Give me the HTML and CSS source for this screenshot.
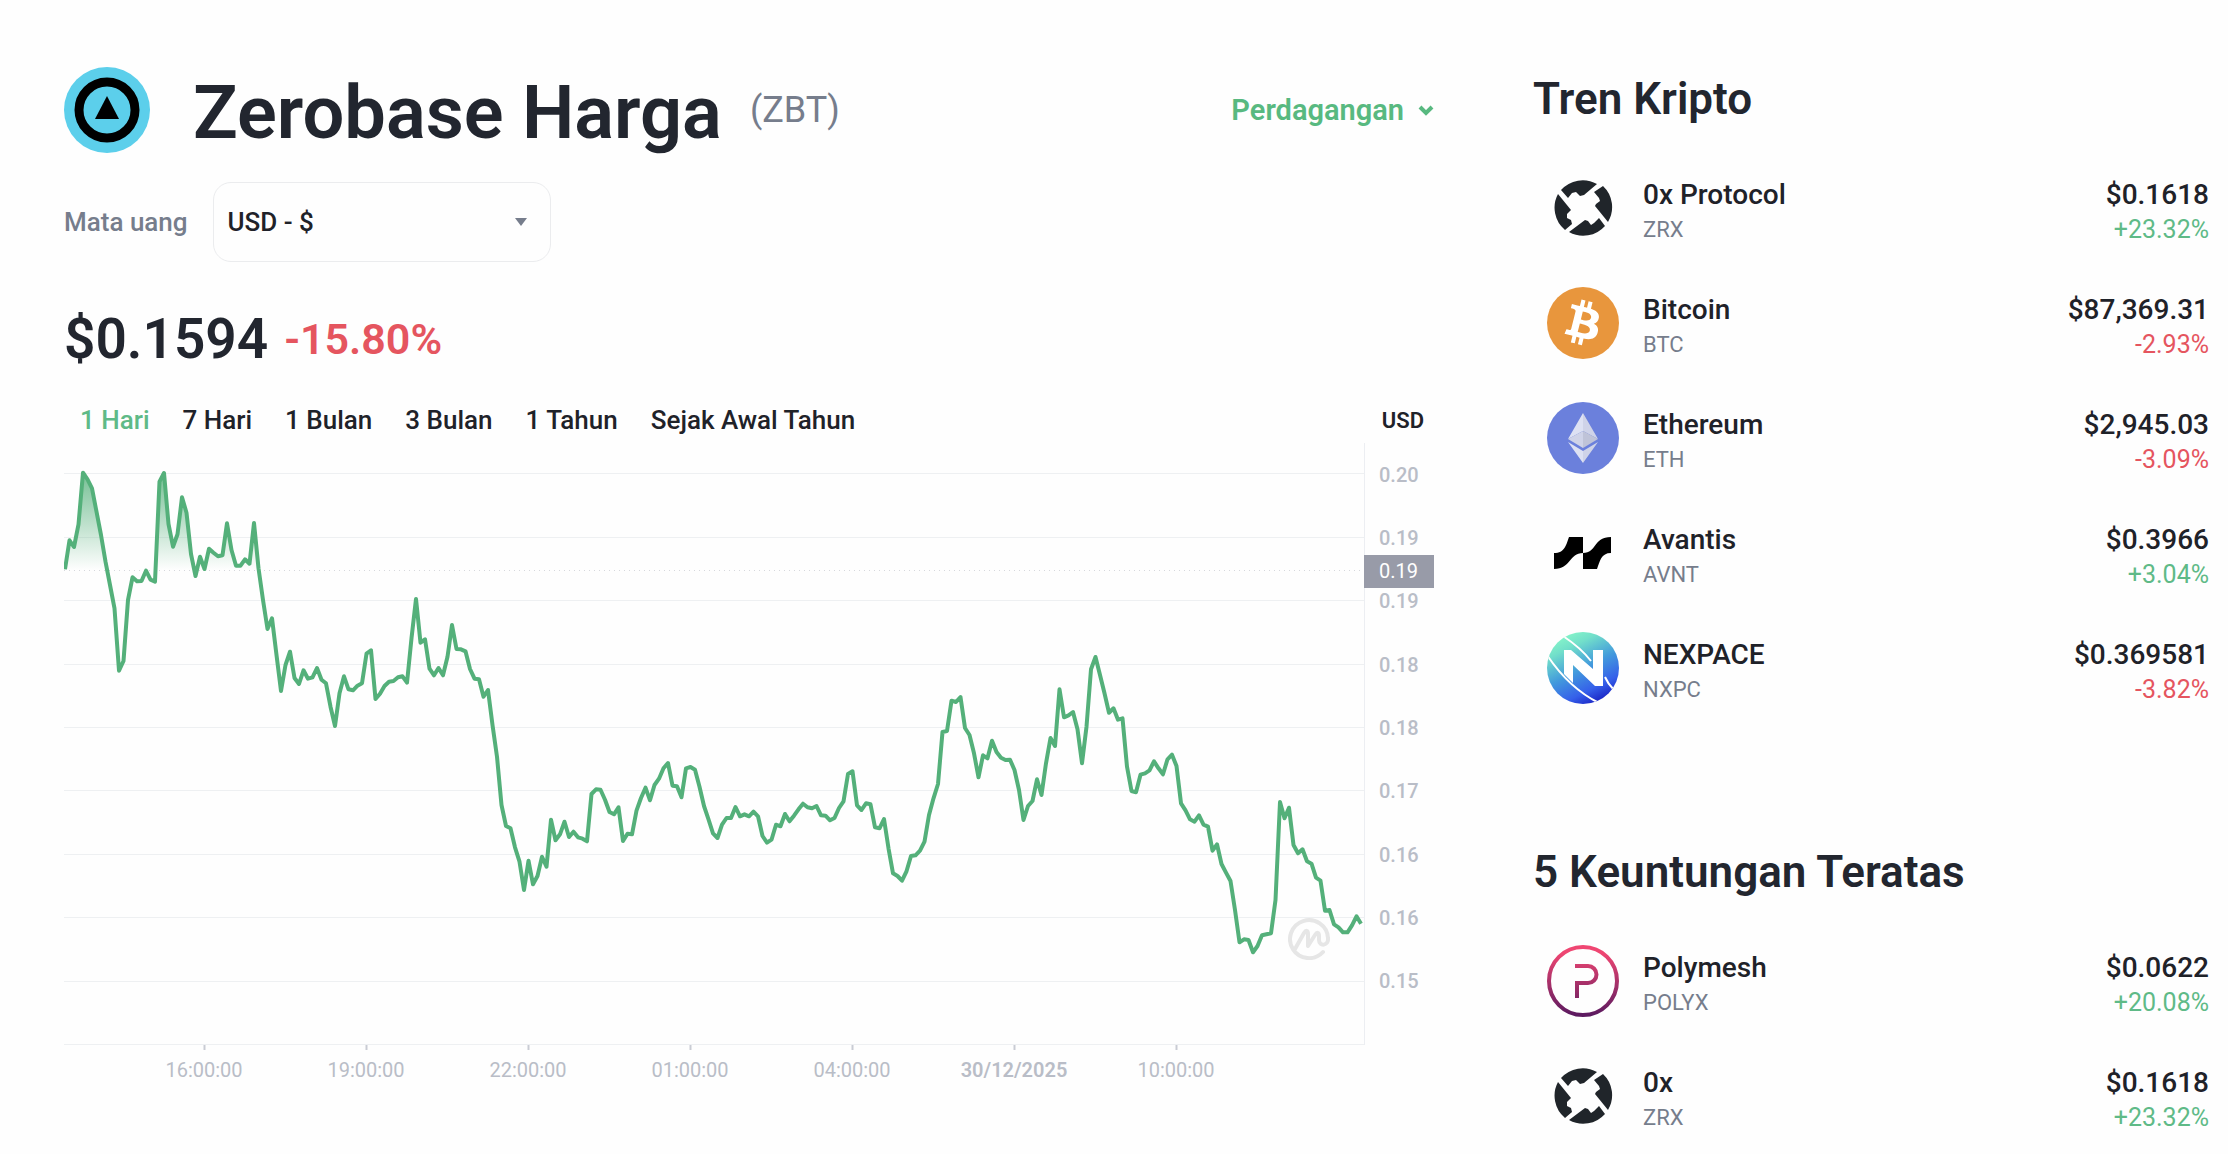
FILE: index.html
```html
<!DOCTYPE html>
<html lang="id">
<head>
  <meta charset="UTF-8">
  <meta name="viewport" content="width=device-width, initial-scale=1">
  <title>Zerobase Harga (ZBT)</title>
  <link rel="stylesheet" href="styles.css">
</head>
<body>

<!-- Logo 0x, dipakai di dua daftar -->
<svg class="sprite" width="0" height="0" aria-hidden="true">
  <symbol id="logo-zrx" viewBox="0 0 72 72">
    <g transform="translate(7 7)" fill="#20252a">
      <path d="M7 11 14 19 18 14 22 13 26 17 30 16 43 5A29 29 0 0 0 7 11Z"/>
      <path d="M49 7 40 13 45 19 46 22 42 25 41 27 54 43A29 29 0 0 0 49 7Z"/>
      <path d="M15 53 31 41 34 42 37 46 40 44 45 39 51 47A29 29 0 0 1 15 53Z"/>
      <path d="M4 15 17 31 13 35 13 39 17 41 18 45 11 51A29 29 0 0 1 4 15Z"/>
    </g>
  </symbol>
</svg>

<div class="page">
  <main class="coin">
    <div class="coin-header">
      <svg class="coin-logo" viewBox="0 0 86 86" aria-hidden="true">
        <circle cx="43" cy="43" r="43" fill="#5ccfeb"/>
        <circle cx="43" cy="43" r="28" fill="none" stroke="#000" stroke-width="9"/>
        <path d="M43 29 55 52H31Z"/>
      </svg>
      <h1>Zerobase Harga</h1>
      <span class="coin-symbol">(ZBT)</span>
      <button class="trade-btn" type="button">
        Perdagangan
        <svg width="16" height="16" viewBox="0 0 16 16" aria-hidden="true"><path d="M2 5 8 11 14 5" fill="none" stroke="currentColor" stroke-width="4"/></svg>
      </button>
    </div>

    <div class="currency">
      <label for="currency">Mata uang</label>
      <div class="select-box">
        <select id="currency" name="currency">
          <option value="usd">USD - $</option>
        </select>
      </div>
    </div>

    <div class="price">
      <span class="price-value">$0.1594</span>
      <span class="price-change">-15.80%</span>
    </div>

    <div class="chart-header">
      <div class="ranges">
        <button class="range active" type="button">1 Hari</button>
        <button class="range" type="button">7 Hari</button>
        <button class="range" type="button">1 Bulan</button>
        <button class="range" type="button">3 Bulan</button>
        <button class="range" type="button">1 Tahun</button>
        <button class="range" type="button">Sejak Awal Tahun</button>
      </div>
      <span class="unit">USD</span>
    </div>

    <div class="chart">
      <div class="plot">
        <svg class="plot-svg" viewBox="0 0 1300 608" preserveAspectRatio="none" aria-hidden="true">
          <defs>
            <linearGradient id="fill" gradientUnits="userSpaceOnUse" x1="0" y1="30" x2="0" y2="127">
              <stop offset="0" stop-color="#54b07a" stop-opacity=".8"/>
              <stop offset="1" stop-color="#54b07a" stop-opacity="0"/>
            </linearGradient>
            <clipPath id="above"><rect x="0" y="0" width="1300" height="127"/></clipPath>
          </defs>
          <path class="grid-line" d="M0 30.5H1300M0 94.5H1300M0 157.5H1300M0 221.5H1300M0 284.5H1300M0 347.5H1300M0 411.5H1300M0 474.5H1300M0 538.5H1300M0 601.5H1300"/>
          <path class="tick" d="M140.5 602V607M302.5 602V607M464.5 602V607M626.5 602V607M788.5 602V607M950.5 602V607M1112.5 602V607"/>
          <polygon id="area" fill="url(#fill)" clip-path="url(#above)"/>
          <path class="base-line" d="M0 127.5H1300"/>
          <polyline id="line"/>
        </svg>
        <svg class="watermark" viewBox="0 0 42 42" aria-hidden="true">
          <path d="M35 34A19 19 0 1 1 40 20C41 28 31 29 31 22V18C31 14 29 14 27 17L20 28V16C20 12 18 12 16 15L7 31" fill="none" stroke="#e6e6e6" stroke-width="4" stroke-linecap="round" stroke-linejoin="round"/>
        </svg>
      </div>
      <div class="price-axis">
        <span>0.20</span>
        <span>0.19</span>
        <span>0.19</span>
        <span>0.18</span>
        <span>0.18</span>
        <span>0.17</span>
        <span>0.16</span>
        <span>0.16</span>
        <span>0.15</span>
        <span class="price-tag">0.19</span>
      </div>
      <div class="time-axis">
        <span>16:00:00</span>
        <span>19:00:00</span>
        <span>22:00:00</span>
        <span>01:00:00</span>
        <span>04:00:00</span>
        <b>30/12/2025</b>
        <span>10:00:00</span>
      </div>
    </div>
  </main>

  <aside class="sidebar">
    <section>
      <h2>Tren Kripto</h2>
      <ul class="coins">
        <li><a class="coin-row" href="#zrx">
          <svg class="icon" viewBox="0 0 72 72" aria-hidden="true"><use href="#logo-zrx"/></svg>
          <span class="name">0x Protocol<small>ZRX</small></span>
          <span class="quote">$0.1618<small class="up">+23.32%</small></span>
        </a></li>
        <li><a class="coin-row" href="#btc">
          <svg class="icon" viewBox="0 0 64 64" aria-hidden="true">
            <circle cx="32" cy="32" r="32" fill="#e8963d"/>
            <path fill="#fff" fill-rule="evenodd" d="M46.103 27.444c.637-4.258-2.605-6.547-7.038-8.074l1.438-5.768-3.511-.875-1.4 5.616c-.923-.23-1.871-.447-2.813-.662l1.41-5.653-3.509-.875-1.439 5.766c-.764-.174-1.514-.346-2.242-.527l.004-.018-4.842-1.209-.934 3.75s2.605.597 2.55.634c1.422.355 1.679 1.296 1.636 2.042l-1.638 6.571-.006.025-2.296 9.205c-.174.432-.615 1.08-1.609.834.035.051-2.552-.637-2.552-.637l-1.743 4.019 4.569 1.139c.85.213 1.683.436 2.503.646l-1.453 5.834 3.507.875 1.439-5.772c.958.26 1.888.5 2.798.726l-1.434 5.745 3.511.875 1.453-5.823c5.987 1.133 10.489.676 12.384-4.739 1.527-4.36-.076-6.875-3.226-8.515 2.294-.529 4.022-2.038 4.483-5.155zM38.081 38.694c-1.085 4.36-8.426 2.003-10.806 1.412l1.928-7.729c2.38.594 10.012 1.77 8.878 6.317zM39.167 27.381c-.99 3.966-7.1 1.951-9.082 1.457l1.748-7.01c1.982.494 8.365 1.416 7.334 5.553z"/>
          </svg>
          <span class="name">Bitcoin<small>BTC</small></span>
          <span class="quote">$87,369.31<small class="down">-2.93%</small></span>
        </a></li>
        <li><a class="coin-row" href="#eth">
          <svg class="icon" viewBox="0 0 72 72" aria-hidden="true">
            <circle cx="36" cy="36" r="36" fill="#6b80dc"/>
            <path fill="#dde1f3" d="M36 11 21 37 36 29ZM21 40 36 49V61Z"/>
            <path fill="#cfd3e8" d="M36 11 51 37 36 29ZM21 37 36 29V46ZM51 40 36 49V61Z"/>
            <path fill="#bfc3d8" d="M51 37 36 29V46Z"/>
          </svg>
          <span class="name">Ethereum<small>ETH</small></span>
          <span class="quote">$2,945.03<small class="down">-3.09%</small></span>
        </a></li>
        <li><a class="coin-row" href="#avnt">
          <svg class="icon" viewBox="0 0 72 72" aria-hidden="true">
            <path d="M7 36C18 36 19 28 22 20H36V36C22 36 24 52 7 52ZM36 36C50 36 46 20 64 20V36C54 36 53 44 50 52H36Z"/>
          </svg>
          <span class="name">Avantis<small>AVNT</small></span>
          <span class="quote">$0.3966<small class="up">+3.04%</small></span>
        </a></li>
        <li><a class="coin-row" href="#nxpc">
          <svg class="icon" viewBox="0 0 72 72" aria-hidden="true">
            <linearGradient id="nx" x1=".25" y1="0" x2=".75" y2="1">
              <stop offset="0" stop-color="#88f8c8"/>
              <stop offset=".2" stop-color="#72dfca"/>
              <stop offset=".5" stop-color="#439bdc"/>
              <stop offset=".78" stop-color="#3560ea"/>
              <stop offset="1" stop-color="#1418bd"/>
            </linearGradient>
            <clipPath id="nxc"><circle cx="36" cy="36" r="36"/></clipPath>
            <g clip-path="url(#nxc)">
              <rect width="72" height="72" fill="url(#nx)"/>
              <path d="M16 4Q34 16 44 29M0 23Q22 56 52 71M58 45Q61 52 67 58" fill="none" stroke="#fff" stroke-width="2"/>
              <path fill="#fff" d="M17 18H24L46 37V18H56V54H48L26 33V51L17 42Z"/>
            </g>
          </svg>
          <span class="name">NEXPACE<small>NXPC</small></span>
          <span class="quote">$0.369581<small class="down">-3.82%</small></span>
        </a></li>
      </ul>
    </section>

    <section>
      <h2>5 Keuntungan Teratas</h2>
      <ul class="coins">
        <li><a class="coin-row" href="#polyx">
          <svg class="icon" viewBox="0 0 72 72" aria-hidden="true">
            <linearGradient id="poly" gradientUnits="userSpaceOnUse" x1="0" y1="8" x2="0" y2="70">
              <stop offset="0" stop-color="#ef4672"/>
              <stop offset="1" stop-color="#5c1a60"/>
            </linearGradient>
            <g fill="none" stroke="url(#poly)" stroke-width="4">
              <circle cx="36" cy="36" r="34"/>
              <path d="M28 21H41A8.500 8.500 0 0 1 41 38H30V53"/>
            </g>
          </svg>
          <span class="name">Polymesh<small>POLYX</small></span>
          <span class="quote">$0.0622<small class="up">+20.08%</small></span>
        </a></li>
        <li><a class="coin-row" href="#zrx">
          <svg class="icon" viewBox="0 0 72 72" aria-hidden="true"><use href="#logo-zrx"/></svg>
          <span class="name">0x<small>ZRX</small></span>
          <span class="quote">$0.1618<small class="up">+23.32%</small></span>
        </a></li>
      </ul>
    </section>
  </aside>
</div>

<script src="chart.js"></script>
</body>
</html>
```

FILE: styles.css
```css
* {
  box-sizing: border-box;
}

body {
  margin: 0;
  font-family: Roboto, Arial, sans-serif;
  font-size: 28px;
  font-weight: 500;
  color: #1f2229;
  background-color: #fefefe;
}

h1, h2, ul {
  margin: 0;
  padding: 0;
}

button, select {
  font: inherit;
  color: inherit;
  background: none;
  border: none;
  cursor: pointer;
}

.sprite {
  position: absolute;
}

.page {
  display: grid;
  grid-template-columns: 1370fr 676fr;
  gap: 99px;
  height: 100vh;
  overflow: hidden;
  padding: 0 19px 0 64px;
}

/* Kolom kiri */
.coin {
  padding-top: 67px;
}

.coin-header {
  display: flex;
  align-items: center;
  height: 86px;
}

.coin-logo {
  width: 86px;
  height: 86px;
  margin-right: 43px;
}

h1 {
  padding-top: 5px;
  font-size: 74px;
  font-weight: 600;
  line-height: 86px;
  color: #22262f;
}

.coin-symbol {
  margin-left: 28px;
  font-size: 36px;
  font-weight: 400;
  color: #767d8c;
}

.trade-btn {
  display: flex;
  align-items: center;
  gap: 14px;
  margin-left: auto;
  padding: 0;
  font-size: 29px;
  font-weight: 600;
  color: #58b980;
}

.currency {
  display: flex;
  align-items: center;
  gap: 25px;
  margin-top: 29px;
  font-size: 26px;
}

.currency label {
  color: #767d8c;
}

.select-box {
  position: relative;
  width: 338px;
}

.select-box select {
  width: 100%;
  height: 80px;
  padding: 0 14px;
  border: 1px solid #ebecee;
  border-radius: 18px;
  appearance: none;
}

.select-box::after {
  content: "";
  position: absolute;
  top: 36px;
  right: 24px;
  border: 6px solid transparent;
  border-top: 8px solid #767d8c;
  border-bottom: 0;
  pointer-events: none;
}

.price {
  display: flex;
  align-items: center;
  gap: 16px;
  height: 80px;
  margin-top: 37px;
}

.price-value {
  font-size: 55px;
  font-weight: 600;
  color: #22262f;
}

.price-change {
  font-size: 43px;
  font-weight: 600;
  color: #e5555f;
}

.chart-header {
  display: flex;
  align-items: center;
  justify-content: space-between;
  height: 64px;
  padding: 18px 10px 0 0;
}

.ranges {
  display: flex;
  font-size: 26px;
}

.range {
  padding: 0 17px 0 16px;
}

.range.active {
  color: #5fba87;
}

.unit {
  font-size: 22px;
  font-weight: 600;
}

.chart {
  display: grid;
  grid-template-columns: 1fr 70px;
}

.plot {
  position: relative;
}

.plot-svg {
  display: block;
  width: 100%;
  height: 608px;
}

.plot-svg path,
.plot-svg polyline {
  fill: none;
  vector-effect: non-scaling-stroke;
}

.grid-line {
  stroke: #eef0f2;
}

.tick {
  stroke: #c9ccd4;
  stroke-width: 2px;
}

.base-line {
  stroke: #d6d8dc;
  stroke-dasharray: 1 4;
}

#line {
  stroke: #54b07a;
  stroke-width: 4px;
  stroke-linejoin: round;
}

.watermark {
  position: absolute;
  right: 34px;
  bottom: 91px;
  width: 42px;
  height: 42px;
}

.price-axis {
  position: relative;
  display: grid;
  grid-template-rows: repeat(9, 63fr) 32fr;
  height: 602px;
  border-left: 1px solid #eceef2;
  font-size: 20px;
  color: #b9bdc7;
}

.price-axis span {
  align-self: center;
  padding-left: 14px;
}

.price-axis .price-tag {
  position: absolute;
  top: 112px;
  left: -1px;
  width: 70px;
  padding-left: 15px;
  line-height: 33px;
  font-weight: 400;
  color: #fff;
  background-color: #989ba8;
}

.time-axis {
  display: grid;
  grid-template-columns: 59fr repeat(7, 162fr) 107fr;
  margin-top: 7px;
  font-size: 20px;
  font-weight: 400;
  line-height: 24px;
  text-align: center;
  color: #b9bdc7;
}

.time-axis span:first-child {
  grid-column: 2;
}

.time-axis b {
  font-weight: 600;
}

/* Kolom kanan */
.sidebar {
  padding-top: 74px;
}

h2 {
  font-size: 44px;
  font-weight: 600;
  line-height: 50px;
  color: #22262f;
}

.coins {
  margin: 26px 0 122px;
  list-style: none;
}

.coin-row {
  display: flex;
  align-items: center;
  height: 115px;
  padding-left: 14px;
  line-height: 35px;
  color: inherit;
  text-decoration: none;
}

.icon {
  width: 72px;
  height: 72px;
  margin-right: 24px;
}

.name,
.quote {
  padding-top: 8px;
}

.quote {
  margin-left: auto;
  text-align: right;
}

small {
  display: block;
  font-size: 22px;
  font-weight: 400;
  color: #767d8c;
}

.quote small {
  font-size: 25px;
}

.quote .up {
  color: #5fba87;
}

.quote .down {
  color: #e5555f;
}
```

FILE: chart.js
```js
// tinggi garis per 5 menit (3 satuan = 1px)
const points = [
  508, 421, 441, 373, 218, 238, 265, 335, 405, 485,
  555, 625, 812, 783, 600, 532, 544, 543, 512, 539,
  545, 245, 219, 372, 440, 403, 292, 338, 462, 528,
  470, 507, 446, 458, 469, 466, 370, 450, 497, 497,
  478, 491, 369, 505, 600, 687, 655, 765, 873, 795,
  755, 834, 852, 811, 836, 832, 804, 839, 850, 920,
  978, 880, 829, 868, 871, 857, 850, 761, 751, 897,
  881, 858, 845, 843, 832, 829, 848, 715, 597, 728,
  718, 806, 826, 804, 826, 770, 675, 747, 748, 754,
  807, 836, 838, 890, 870, 975, 1070, 1215, 1278, 1285,
  1342, 1385, 1470, 1382, 1453, 1428, 1370, 1400, 1259, 1321,
  1303, 1265, 1311, 1295, 1312, 1316, 1324, 1182, 1168, 1169,
  1199, 1236, 1243, 1222, 1323, 1301, 1303, 1232, 1194, 1163,
  1201, 1155, 1136, 1105, 1089, 1157, 1159, 1192, 1105, 1101,
  1109, 1160, 1218, 1258, 1300, 1314, 1274, 1254, 1254, 1221,
  1249, 1243, 1249, 1235, 1249, 1308, 1328, 1319, 1274, 1279,
  1242, 1264, 1247, 1228, 1211, 1222, 1225, 1218, 1246, 1247,
  1261, 1254, 1224, 1204, 1122, 1114, 1216, 1230, 1210, 1213,
  1282, 1285, 1257, 1345, 1420, 1428, 1442, 1414, 1368, 1366,
  1352, 1325, 1245, 1195, 1152, 996, 993, 902, 906, 891,
  984, 1005, 1060, 1132, 1066, 1075, 1022, 1056, 1073, 1080,
  1079, 1110, 1170, 1260, 1218, 1203, 1138, 1185, 1090, 1014,
  1038, 868, 952, 946, 936, 988, 1090, 980, 808, 771,
  825, 880, 938, 925, 959, 955, 1100, 1173, 1177, 1124,
  1120, 1111, 1084, 1105, 1123, 1078, 1064, 1098, 1210, 1231,
  1258, 1265, 1246, 1274, 1280, 1352, 1333, 1392, 1418, 1443,
  1530, 1627, 1618, 1620, 1657, 1638, 1606, 1603, 1600, 1500,
  1206, 1255, 1223, 1335, 1360, 1348, 1384, 1391, 1433, 1442,
  1532, 1530, 1573, 1582, 1597, 1597, 1576, 1549, 1571
];

const coords = points.map((y, i) => `${1 + i * 4.5},${(y / 3 - 43).toFixed(1)}`).join(' ');

document.getElementById('line').setAttribute('points', coords);
document.getElementById('area').setAttribute('points', `1,608 ${coords} 1297,608`);

const ranges = document.querySelectorAll('.range');
ranges.forEach(range => {
  range.addEventListener('click', () => {
    ranges.forEach(r => r.classList.remove('active'));
    range.classList.add('active');
  });
});
```
